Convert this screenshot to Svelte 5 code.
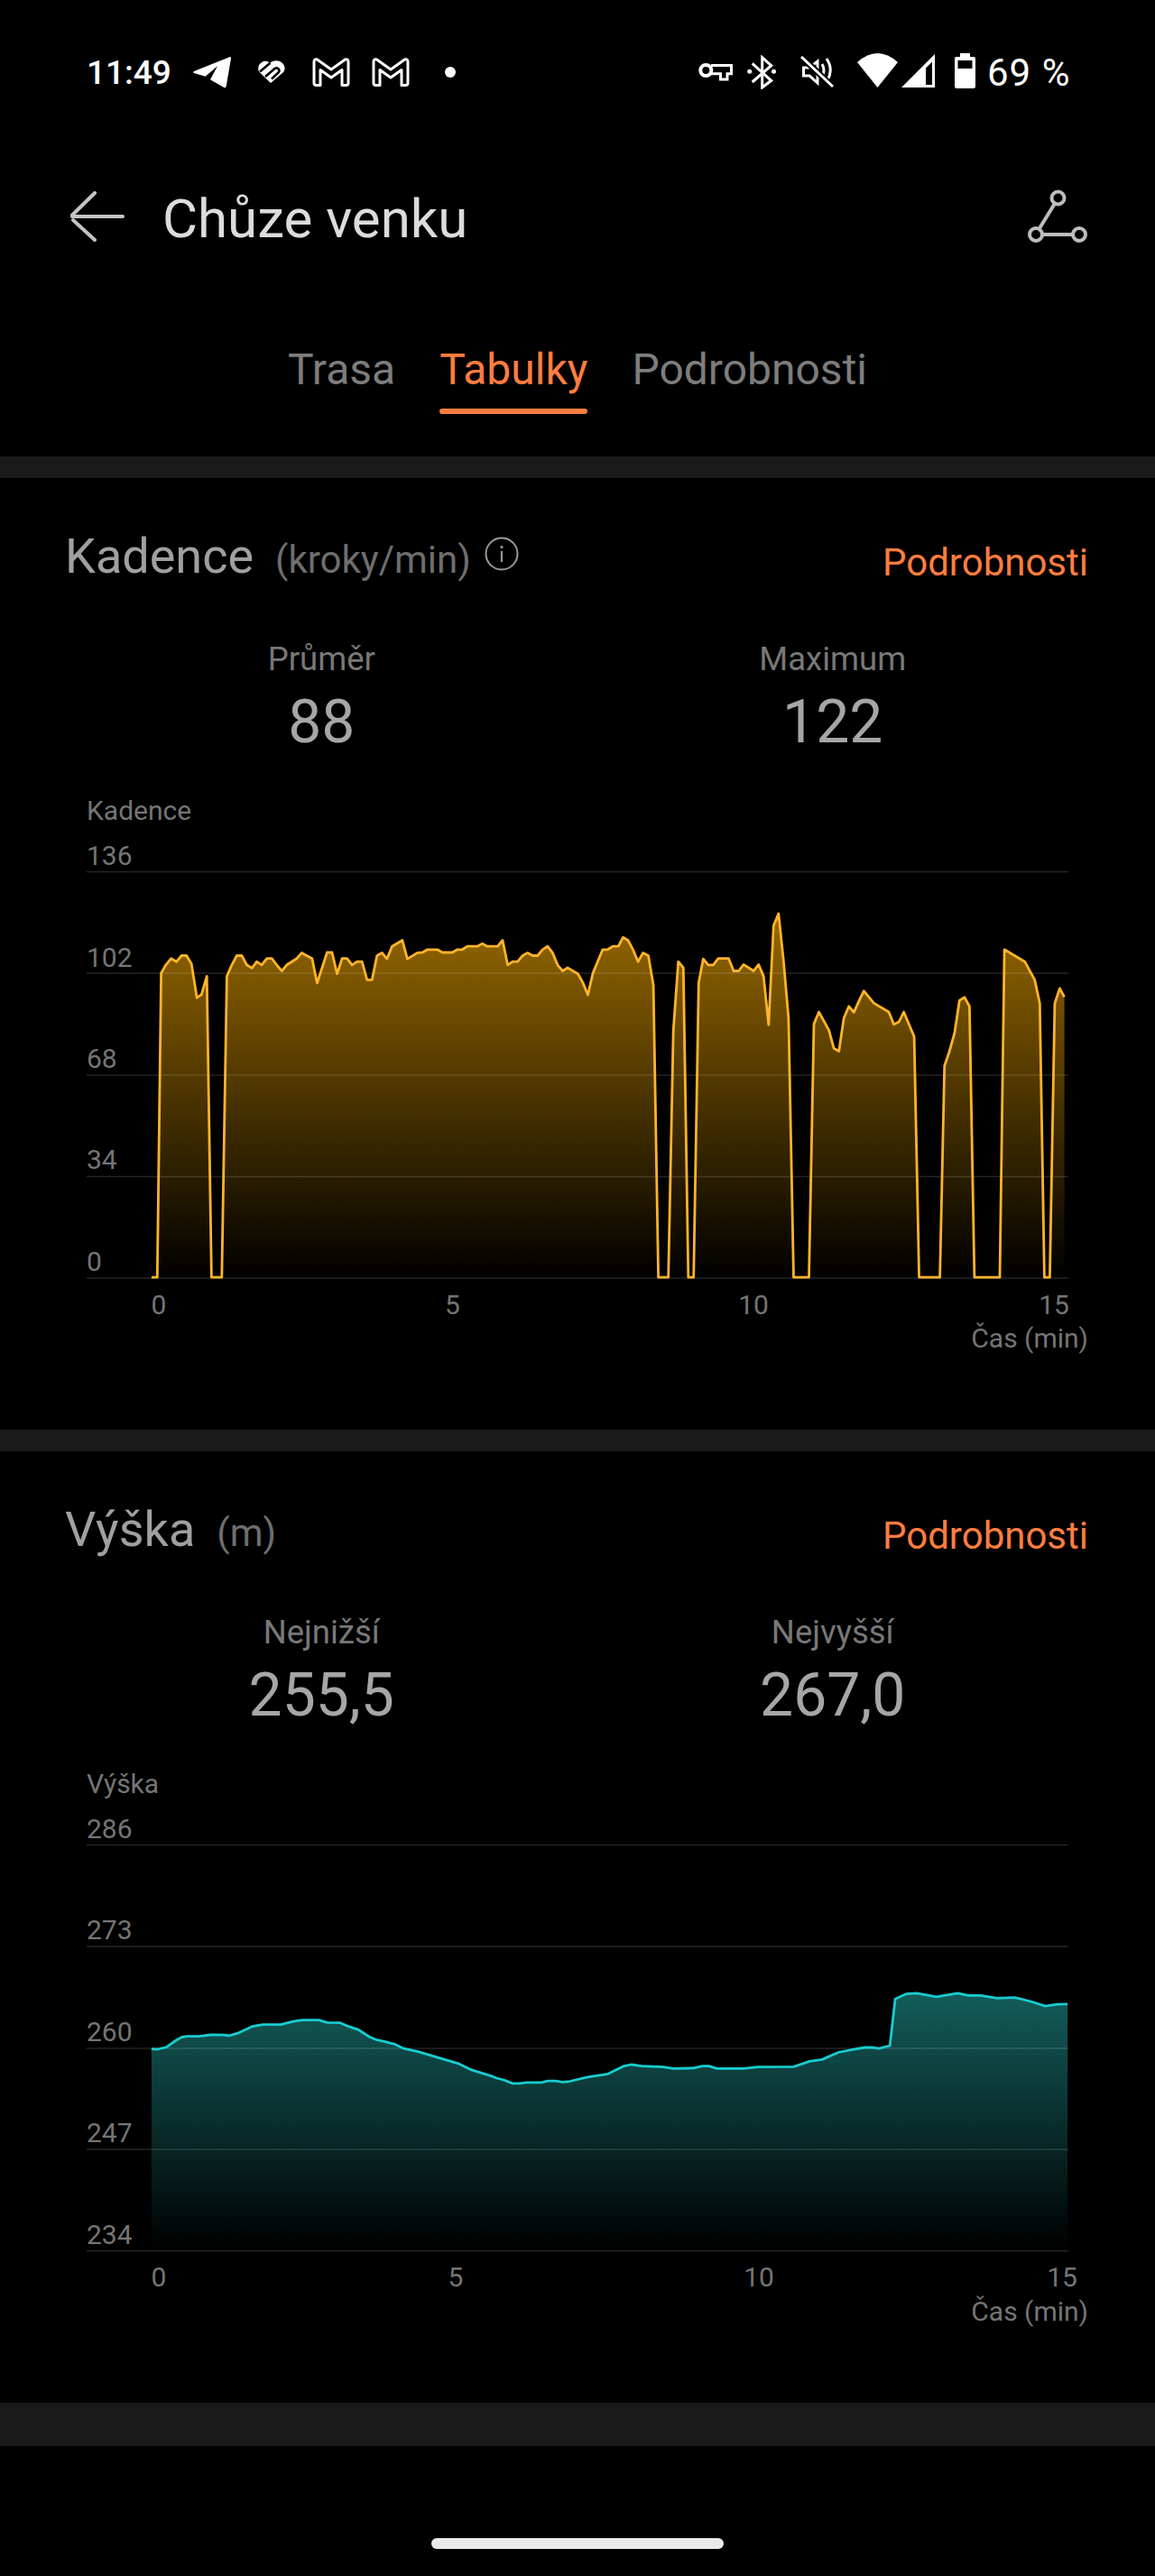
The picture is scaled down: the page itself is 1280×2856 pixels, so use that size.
<script>
  const k = 1568 / 620;

  // traced from the reference, in crop coordinates
  function trace(segments, top) {
    let out = [];
    for (const seg of segments) {
      for (let i = 0; i < seg.pts.length; i += 2) {
        out.push([seg.x0 + seg.pts[i] / k, top + seg.pts[i + 1] / k]);
      }
    }
    return out;
  }

  function line(points) {
    return points.map((p) => p[0].toFixed(1) + "," + p[1].toFixed(1)).join(" ");
  }

  const cadence = trace(
    [
      {
        x0: 60,
        pts: [
          273, 1356, 289, 1356, 300, 503, 313, 480, 328, 462, 343, 471, 357, 454, 371, 454, 385, 477, 400, 572, 413, 563,
          428, 512, 441, 1356, 470, 1356, 484, 512, 498, 480, 512, 454, 526, 454, 540, 480, 554, 489, 568, 471, 582, 480,
          596, 462, 610, 462, 624, 480, 638, 497, 652, 480, 680, 462, 694, 446, 723, 462, 737, 531, 765, 445, 779, 445,
          793, 505, 807, 462, 821, 462, 835, 480, 849, 471, 863, 471, 877, 522, 891, 522, 905, 454, 919, 446, 933, 463,
          947, 428, 976, 411, 990, 463, 1018, 446, 1032, 445, 1046, 437, 1074, 437, 1088, 445, 1116, 445, 1130, 437, 1144,
          437, 1158, 428, 1186, 428, 1200, 420, 1214, 428, 1243, 428, 1257, 411, 1271, 480, 1285, 471, 1299, 471, 1313,
          454, 1327, 446, 1341, 454, 1355, 454, 1369, 437, 1383, 428, 1397, 446, 1411, 480, 1425, 497, 1439, 488, 1468,
          505, 1482, 530, 1496, 564, 1510, 503
        ]
      },
      {
        x0: 660,
        pts: [
          20, 437, 34, 437, 48, 428, 64, 428, 77, 403, 91, 411, 105, 437, 119, 471, 133, 446, 148, 454, 162, 537, 176, 1356,
          204, 1356, 218, 665, 232, 471, 246, 488, 260, 1356, 275, 1356, 289, 530, 302, 463, 316, 480, 330, 480, 344, 462,
          373, 462, 387, 497, 401, 497, 415, 479, 443, 497, 457, 479, 471, 512, 485, 648, 499, 370, 513, 336, 527, 470, 541,
          630, 555, 1356, 598, 1356, 612, 646, 626, 612, 654, 663, 668, 714, 682, 722, 696, 629, 710, 596, 724, 613, 738,
          582, 752, 553, 780, 587, 822, 612, 836, 647, 850, 640, 864, 612, 893, 681, 907, 1356, 965, 1356, 978, 763, 992,
          722, 1006, 672, 1020, 580, 1034, 571, 1048, 596, 1062, 1356, 1133, 1356, 1146, 437, 1203, 471, 1231, 522, 1245,
          588, 1258, 1356, 1273, 1356, 1287, 588, 1301, 546, 1314, 570
        ]
      }
    ],
    880
  );

  const height = trace(
    [
      {
        x0: 60,
        pts: [
          273, 788, 290, 789, 315, 783, 340, 765, 358, 755, 372, 753, 405, 753, 420, 751, 440, 748, 475, 749, 490, 751, 515,
          744, 555, 725, 585, 720, 635, 720, 670, 711, 695, 707, 742, 707, 765, 714, 802, 715, 825, 725, 850, 733, 885, 755,
          905, 763, 925, 767, 955, 775, 980, 787, 1020, 796, 1135, 830, 1170, 847, 1225, 864, 1240, 870, 1260, 875, 1285,
          885, 1305, 885, 1325, 882, 1365, 882, 1385, 878, 1405, 878, 1425, 881, 1440, 880, 1495, 867
        ]
      },
      {
        x0: 660,
        pts: [
          35, 858, 80, 836, 100, 832, 130, 836, 190, 839, 218, 843, 275, 842, 300, 836, 318, 836, 340, 843, 415, 843, 455,
          839, 555, 838, 600, 823, 635, 818, 680, 798, 720, 790, 755, 784, 775, 784, 795, 787, 825, 779, 840, 648, 870, 634,
          900, 632, 955, 642, 1015, 632, 1045, 638, 1080, 638, 1125, 646, 1175, 644, 1220, 655, 1260, 668, 1295, 663, 1323,
          662
        ]
      }
    ],
    1960
  );

  const cards = [
    {
      id: "cad",
      title: "Kadence",
      unit: "(kroky/min)",
      info: true,
      stats: [
        { label: "Průměr", value: "88" },
        { label: "Maximum", value: "122" }
      ],
      top: 880,
      label: { text: "Kadence", y: 908.5 },
      grid: [966.5, 1079, 1192, 1304.5, 1417],
      ticks: [
        { text: "136", y: 959 },
        { text: "102", y: 1071.5 },
        { text: "68", y: 1184 },
        { text: "34", y: 1296 },
        { text: "0", y: 1409 }
      ],
      xlabels: [
        { text: "0", x: 176 },
        { text: "5", x: 501.5 },
        { text: "10", x: 835 },
        { text: "15", x: 1168 }
      ],
      xy: 1456.5,
      cas: 1494,
      points: cadence,
      floor: 1417,
      stroke: "#ffb42a",
      from: "#a87400",
      gradTop: 966
    },
    {
      id: "alt",
      title: "Výška",
      unit: "(m)",
      info: false,
      stats: [
        { label: "Nejnižší", value: "255,5" },
        { label: "Nejvyšší", value: "267,0" }
      ],
      top: 1959,
      label: { text: "Výška", y: 1987.5 },
      grid: [2045.5, 2158, 2271, 2383, 2495.5],
      ticks: [
        { text: "286", y: 2038 },
        { text: "273", y: 2150 },
        { text: "260", y: 2263 },
        { text: "247", y: 2375 },
        { text: "234", y: 2488 }
      ],
      xlabels: [
        { text: "0", x: 176 },
        { text: "5", x: 505 },
        { text: "10", x: 841 },
        { text: "15", x: 1177 }
      ],
      xy: 2535,
      cas: 2573,
      points: height,
      floor: 2495,
      stroke: "#18cdd0",
      from: "#135e5c",
      gradTop: 2205
    }
  ];

  function area(c) {
    const first = c.points[0];
    const last = c.points[c.points.length - 1];
    return (
      line(c.points) + " " + last[0].toFixed(1) + "," + c.floor + " " + first[0].toFixed(1) + "," + c.floor
    );
  }
</script>

<div class="page">
  <div class="status">
    <span class="time">11:49</span>
    <svg class="i-tg" width="42" height="37" viewBox="0 0 42 37">
      <path fill="#fff" d="M41 1 L1 17 Q-1 18.700 1.700 19.300 L13.700 22.700 L27 11.300 L19 26.300 L34.300 35 Q36.300 35.700 36.700 33.700 L42 2.700 Q42 .7 41 1Z" />
    </svg>
    <svg class="i-heart" width="30" height="26" viewBox="0 0 30 26">
      <path fill="#fff" d="M14 25 L1.500 13 C-1 10 0 3.500 5.500 1.200 C8.500 .2 11 1 13 3 C16 .2 21 -.6 25 1.500 C30 4.500 31 10 27.500 13.500Z" />
      <path fill="none" stroke="#000" stroke-width="2.600" d="M2 12.500 L13.500 2.800 M8 18 L18.500 9 Q21 7.500 22.800 9.500 Q24.300 11.500 22.500 13.500 L15 20.500" />
    </svg>
    <svg class="i-m" width="42" height="32" viewBox="0 0 42 32">
      <path fill="none" stroke="#fff" stroke-width="3" stroke-linejoin="round" d="M2 4.500 Q2 1 5.500 2 L21 13 L36.500 2 Q40 1 40 4.500 V28 Q40 30.500 37.500 30.500 H33 V13.500 L21 22 L9 13.500 V30.500 H4.500 Q2 30.500 2 28Z" />
    </svg>
    <svg class="i-m2" width="42" height="32" viewBox="0 0 42 32">
      <path fill="none" stroke="#fff" stroke-width="3" stroke-linejoin="round" d="M2 4.500 Q2 1 5.500 2 L21 13 L36.500 2 Q40 1 40 4.500 V28 Q40 30.500 37.500 30.500 H33 V13.500 L21 22 L9 13.500 V30.500 H4.500 Q2 30.500 2 28Z" />
    </svg>
    <span class="dot"></span>

    <svg class="i-key" width="38" height="22" viewBox="0 0 38 22">
      <circle cx="8.300" cy="9" r="6" fill="none" stroke="#fff" stroke-width="4" />
      <path fill="none" stroke="#fff" stroke-width="3" d="M14 3.500 H36.500 V12.700 H32 V19 H24.500 V12.700 H14" />
    </svg>
    <svg class="i-bt" width="33" height="38" viewBox="0 0 33 38">
      <path fill="none" stroke="#fff" stroke-width="3" d="M5.700 9.300 L26.700 28.300 L16.700 36 V2.700 L26.700 11.700 L5.700 30" />
      <circle cx="2.700" cy="18.300" r="2.500" fill="#fff" />
      <circle cx="29.500" cy="18.300" r="2.500" fill="#fff" />
    </svg>
    <svg class="i-mute" width="37" height="36" viewBox="0 0 37 36">
      <path fill="none" stroke="#fff" stroke-width="3" d="M3.500 13 H10 L19 6 V30 L10 22 H3.500Z" />
      <path fill="none" stroke="#fff" stroke-width="3" d="M24 9 Q28 16 24 23 M29 3 Q37 15 30 27" />
      <path stroke="#000" stroke-width="7" d="M0 0 L36 34" />
      <path stroke="#fff" stroke-width="3" d="M1 1 L36 34" />
    </svg>
    <svg class="i-wifi" width="45" height="38" viewBox="0 0 45 38">
      <path fill="#fff" d="M0 10 Q22.500 -10 45 10 L22.500 38Z" />
    </svg>
    <svg class="i-sig" width="37" height="37" viewBox="0 0 37 37">
      <path fill="#fff" d="M0 37 L37 0 V37Z" />
      <path fill="#000" d="M27 34 H34 V8.500 L27 15.500Z" />
    </svg>
    <svg class="i-bat" width="23" height="39" viewBox="0 0 23 39">
      <path fill="#fff" d="M6 0 H17 V4 H21 Q23 4 23 6 V37 Q23 39 21 39 H2 Q0 39 0 37 V6 Q0 4 2 4 H6Z" />
      <rect x="3.500" y="8" width="16" height="9" fill="#000" />
    </svg>
    <span class="pct">69 %</span>
  </div>

  <div class="header">
    <svg class="back" width="60" height="56" viewBox="0 0 60 56">
      <path fill="none" stroke="#c4c4c4" stroke-width="4" stroke-linecap="round" d="M2 28 H58 M27 2 L2 26.500 M3 32 L27 54" />
    </svg>
    <h1>Chůze venku</h1>
    <svg class="route" width="68" height="60" viewBox="0 0 68 60">
      <g fill="none" stroke="#bdbdbd" stroke-width="4">
        <circle cx="34.500" cy="9.500" r="7" />
        <circle cx="10" cy="50" r="7" />
        <circle cx="58" cy="50" r="7" />
        <path d="M31 15.500 L13.500 44 M17 50 H51" />
      </g>
    </svg>
  </div>

  <div class="tabs">
    <div class="tab">Trasa</div>
    <div class="tab active">Tabulky</div>
    <div class="tab">Podrobnosti</div>
  </div>

  {#each cards as c}
    <div class="band"></div>
    <section class="card">
      <div class="head">
        <div class="name">
          <span class="title">{c.title}</span>
          <span class="unit">{c.unit}</span>
          {#if c.info}
            <svg class="info" width="38" height="38" viewBox="0 0 38 38">
              <circle cx="19" cy="19" r="17.500" fill="none" stroke="#999" stroke-width="2" />
              <circle cx="19" cy="11.500" r="1.600" fill="#999" />
              <path stroke="#999" stroke-width="2.200" d="M19 16 V28" />
            </svg>
          {/if}
        </div>
        <span class="link">Podrobnosti</span>
      </div>

      <div class="stats">
        {#each c.stats as s}
          <div class="stat">
            <div class="stat-label">{s.label}</div>
            <div class="stat-value">{s.value}</div>
          </div>
        {/each}
      </div>

      <svg class="chart" width="1280" height="630" viewBox="0 {c.top} 1280 630">
        <defs>
          <linearGradient id="fill-{c.id}" gradientUnits="userSpaceOnUse" x1="0" y1={c.gradTop} x2="0" y2={c.floor}>
            <stop offset="0" stop-color={c.from} />
            <stop offset="1" stop-color="#000" />
          </linearGradient>
        </defs>
        <polygon points={area(c)} fill="url(#fill-{c.id})" />
        {#each c.grid as y}
          <line x1="96" x2="1184" y1={y} y2={y} stroke="#fff" stroke-opacity="0.14" stroke-width="1.500" />
        {/each}
        <polyline points={line(c.points)} fill="none" stroke={c.stroke} stroke-width="2.800" stroke-linejoin="round" />
        <text x="96" y={c.label.y}>{c.label.text}</text>
        {#each c.ticks as t}
          <text x="96" y={t.y}>{t.text}</text>
        {/each}
        {#each c.xlabels as t}
          <text x={t.x} y={c.xy} text-anchor="middle">{t.text}</text>
        {/each}
        <text x="1206" y={c.cas} text-anchor="end">Čas (min)</text>
      </svg>
    </section>
  {/each}

  <div class="band wide"></div>
  <div class="footer"><div class="home"></div></div>
</div>

<style>
  :global(body) {
    margin: 0;
    background: #000;
    font-family: Roboto, "Liberation Sans", sans-serif;
  }

  .page {
    width: 1280px;
    height: 2856px;
    background: #000;
    overflow: hidden;
  }

  .status {
    height: 160px;
    display: flex;
    align-items: center;
    padding: 0 95px 0 96px;
    color: #fff;
  }

  .time {
    font-size: 37px;
    font-weight: 500;
    width: 91px;
    white-space: nowrap;
  }

  .i-tg { margin-left: 27px; }
  .i-heart { margin-left: 30px; }
  .i-m { margin-left: 30px; }
  .i-m2 { margin-left: 24px; }

  .dot {
    width: 12px;
    height: 12px;
    border-radius: 50%;
    background: #fff;
    margin-left: 39px;
  }

  .i-key { margin-left: auto; }
  .i-bt { margin-left: 16px; }
  .i-mute { margin-left: 26px; }
  .i-wifi { margin-left: 26px; margin-top: -4px; }
  .i-sig { margin-left: 4px; margin-top: -3px; }
  .i-bat { margin-left: 22px; margin-top: -3px; }

  .pct {
    font-size: 42px;
    margin-left: 13px;
    width: 91px;
    letter-spacing: 1px;
    white-space: nowrap;
  }

  .header {
    height: 160px;
    display: flex;
    align-items: center;
    padding: 0 74px 0 78px;
  }

  .back { flex: none; }

  h1 {
    margin: 0 0 0 42px;
    padding-top: 4px;
    font-size: 60px;
    font-weight: 400;
    color: #dcdcdc;
    flex: 1;
  }

  .route { flex: none; margin-top: -1px; }

  .tabs {
    height: 186px;
    box-sizing: border-box;
    padding-top: 62px;
    display: flex;
    justify-content: center;
    gap: 49px;
    font-size: 48px;
    line-height: 56px;
    color: #7d7d7d;
  }

  .tab.active { color: #ff7d40; }

  .tab.active::after {
    content: "";
    display: block;
    height: 6px;
    border-radius: 3px;
    margin-top: 15px;
    background: #ff7d40;
  }

  .band {
    height: 24px;
    background: #1a1a1a;
  }

  .band.wide { height: 48px; }

  .card {
    height: 1055px;
    box-sizing: border-box;
    padding-top: 55px;
  }

  .head {
    display: flex;
    justify-content: space-between;
    align-items: flex-start;
    height: 64px;
    padding: 0 74px 0 72px;
    line-height: 64px;
  }

  .name {
    display: flex;
    align-items: baseline;
  }

  .title {
    font-size: 54px;
    color: #a0a0a0;
  }

  .unit {
    font-size: 42px;
    color: #6e6e6e;
    margin-left: 24px;
  }

  .info {
    align-self: flex-start;
    margin: 10px 0 0 15px;
  }

  .link {
    font-size: 42px;
    color: #ff7d40;
    margin-top: 7px;
  }

  .stats {
    display: grid;
    grid-template-columns: 1fr 1fr;
    padding: 0 74px 0 73px;
    margin: 60px 0 41px;
    text-align: center;
  }

  .stat-label {
    font-size: 36.500px;
    line-height: 44px;
    color: #787878;
  }

  .stat-value {
    font-size: 66px;
    line-height: 76px;
    margin-top: 10px;
    color: #a6a6a6;
  }

  .chart {
    display: block;
  }

  .chart text {
    font-size: 30px;
    fill: #757575;
  }

  .footer {
    height: 144px;
    box-sizing: border-box;
    padding-top: 102px;
  }

  .home {
    width: 324px;
    height: 12px;
    margin: 0 auto;
    border-radius: 6px;
    background: #eaeaea;
  }
</style>
